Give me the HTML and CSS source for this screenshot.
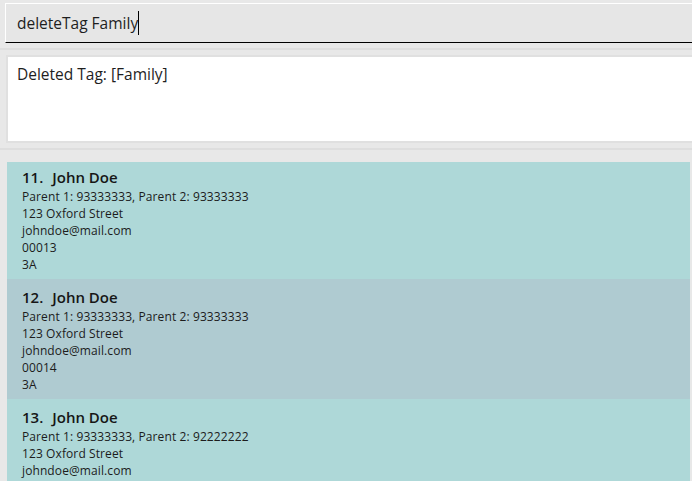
FILE: index.html
```html
<!DOCTYPE html>
<html>
<head>
<meta charset="utf-8">
<link rel="stylesheet" href="styles.css">
</head>
<body>
<div class="app">
  <div class="cmd-wrap">
    <div class="cmd"><span class="cmd-text">deleteTag Family</span><span class="caret"></span></div>
  </div>
  <div class="result-wrap">
    <div class="result">Deleted Tag: [Family]</div>
  </div>
  <div class="list-pane">
    <div class="viewport">
      <div class="list">
        <div class="card">
          <div class="name"><span class="idx">11.</span>John Doe</div>
          <div class="line">Parent 1: 93333333, Parent 2: 93333333</div>
          <div class="line">123 Oxford Street</div>
          <div class="line">johndoe@mail.com</div>
          <div class="line">00013</div>
          <div class="line">3A</div>
        </div>
        <div class="card alt">
          <div class="name"><span class="idx">12.</span>John Doe</div>
          <div class="line">Parent 1: 93333333, Parent 2: 93333333</div>
          <div class="line">123 Oxford Street</div>
          <div class="line">johndoe@mail.com</div>
          <div class="line">00014</div>
          <div class="line">3A</div>
        </div>
        <div class="card">
          <div class="name"><span class="idx">13.</span>John Doe</div>
          <div class="line">Parent 1: 93333333, Parent 2: 92222222</div>
          <div class="line">123 Oxford Street</div>
          <div class="line">johndoe@mail.com</div>
        </div>
      </div>
    </div>
  </div>
</div>
</body>
</html>
```
FILE: styles.css
```css
html, body {
  margin: 0;
  padding: 0;
  background: #e8e8e8;
  font-family: "Open Sans", "Noto Sans", sans-serif;
  color: #1c1c1c;
}
.app {
  width: 692px;
  height: 481px;
  overflow: hidden;
  display: flex;
  flex-direction: column;
}
.cmd-wrap {
  padding: 3px 0 0 5px;
}
.cmd {
  height: 38px;
  background: #e6e6e6;
  border-top: 1px solid #ffffff;
  border-left: 1px solid #ffffff;
  border-bottom: 1px solid #000000;
  display: flex;
  align-items: center;
  padding-left: 11px;
}
.cmd-text {
  font-size: 15.5px;
  color: #1e1e1e;
}
.caret {
  width: 1px;
  height: 24px;
  background: #000;
}
.result-wrap {
  margin-top: 5px;
  border-top: 2px solid #dedede;
  border-bottom: 2px solid #dedede;
  padding: 5px 0 5px 6px;
}
.result {
  box-sizing: border-box;
  height: 88px;
  background: #ffffff;
  border: 2px solid #e0e0e0;
  border-right: none;
  padding: 6px 0 0 9px;
  font-size: 15.5px;
  color: #1e1e1e;
}
.list-pane {
  flex: 1;
  min-height: 0;
  padding: 12px 2px 0 7px;
  display: flex;
  flex-direction: column;
}
.viewport {
  flex: 1;
  min-height: 0;
  overflow: hidden;
}
.list {
  margin-top: -3px;
  display: flex;
  flex-direction: column;
}
.card {
  height: 120px;
  flex-shrink: 0;
  box-sizing: border-box;
  background: #aed8d8;
  padding: 7px 0 0 15px;
}
.card.alt {
  background: #afcbd1;
}
.name {
  font-size: 15px;
  font-weight: 600;
  line-height: 22px;
  color: #161616;
}
.idx {
  margin-right: 9px;
}
.line {
  font-size: 12px;
  line-height: 17px;
  color: #1c1c1c;
  letter-spacing: 0.1px;
}
```
